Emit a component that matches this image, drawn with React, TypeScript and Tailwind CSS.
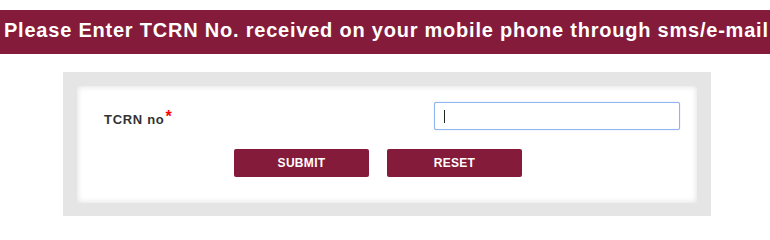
import React from "react";

export default function App() {
  return (
    <div className="w-[770px] h-[224px] bg-white overflow-hidden" style={{ fontFamily: '"Liberation Sans", Arial, sans-serif' }}>
      <div className="mt-[10px] h-[44px] bg-[#841b3a] flex items-center pl-[4px] pb-[5px]">
        <span className="text-white font-bold text-[20px] leading-none tracking-[0.78px] whitespace-nowrap">
          Please Enter TCRN No. received on your mobile phone through sms/e-mail
        </span>
      </div>
      <div className="mt-[18px] ml-[63px] w-[648px] bg-[#e5e5e5] p-[14px] pb-[13px]">
        <div className="bg-white h-[117px] shadow-[inset_0_0_6px_rgba(0,0,0,0.14)] flex flex-col">
          <div className="flex items-start pt-[16px]">
            <label className="ml-[27px] w-[330px] mt-[10px] text-[13px] leading-[15px] font-bold tracking-[0.7px] text-[#333333]">
              TCRN no
              <span className="text-[#ff0000] text-[16px] leading-none align-top relative top-[-3px] ml-[1px]">*</span>
            </label>
            <div className="relative">
              <input
                type="text"
                className="w-[246px] h-[28px] border border-[#8fb4ee] rounded-[2px] outline-none shadow-[0_0_1px_#8fb4ee] bg-white px-[8px] text-[13px]"
              />
              <span className="absolute left-[10px] top-[8px] w-[1px] h-[13px] bg-[#222]" />
            </div>
          </div>
          <div className="flex mt-[19px] ml-[157px] gap-[18px]">
            <button className="w-[135px] h-[28px] bg-[#841b3a] rounded-[2px] text-white font-bold text-[12px] tracking-[0.3px] leading-none">
              SUBMIT
            </button>
            <button className="w-[135px] h-[28px] bg-[#841b3a] rounded-[2px] text-white font-bold text-[12px] tracking-[0.3px] leading-none">
              RESET
            </button>
          </div>
        </div>
      </div>
    </div>
  );
}
